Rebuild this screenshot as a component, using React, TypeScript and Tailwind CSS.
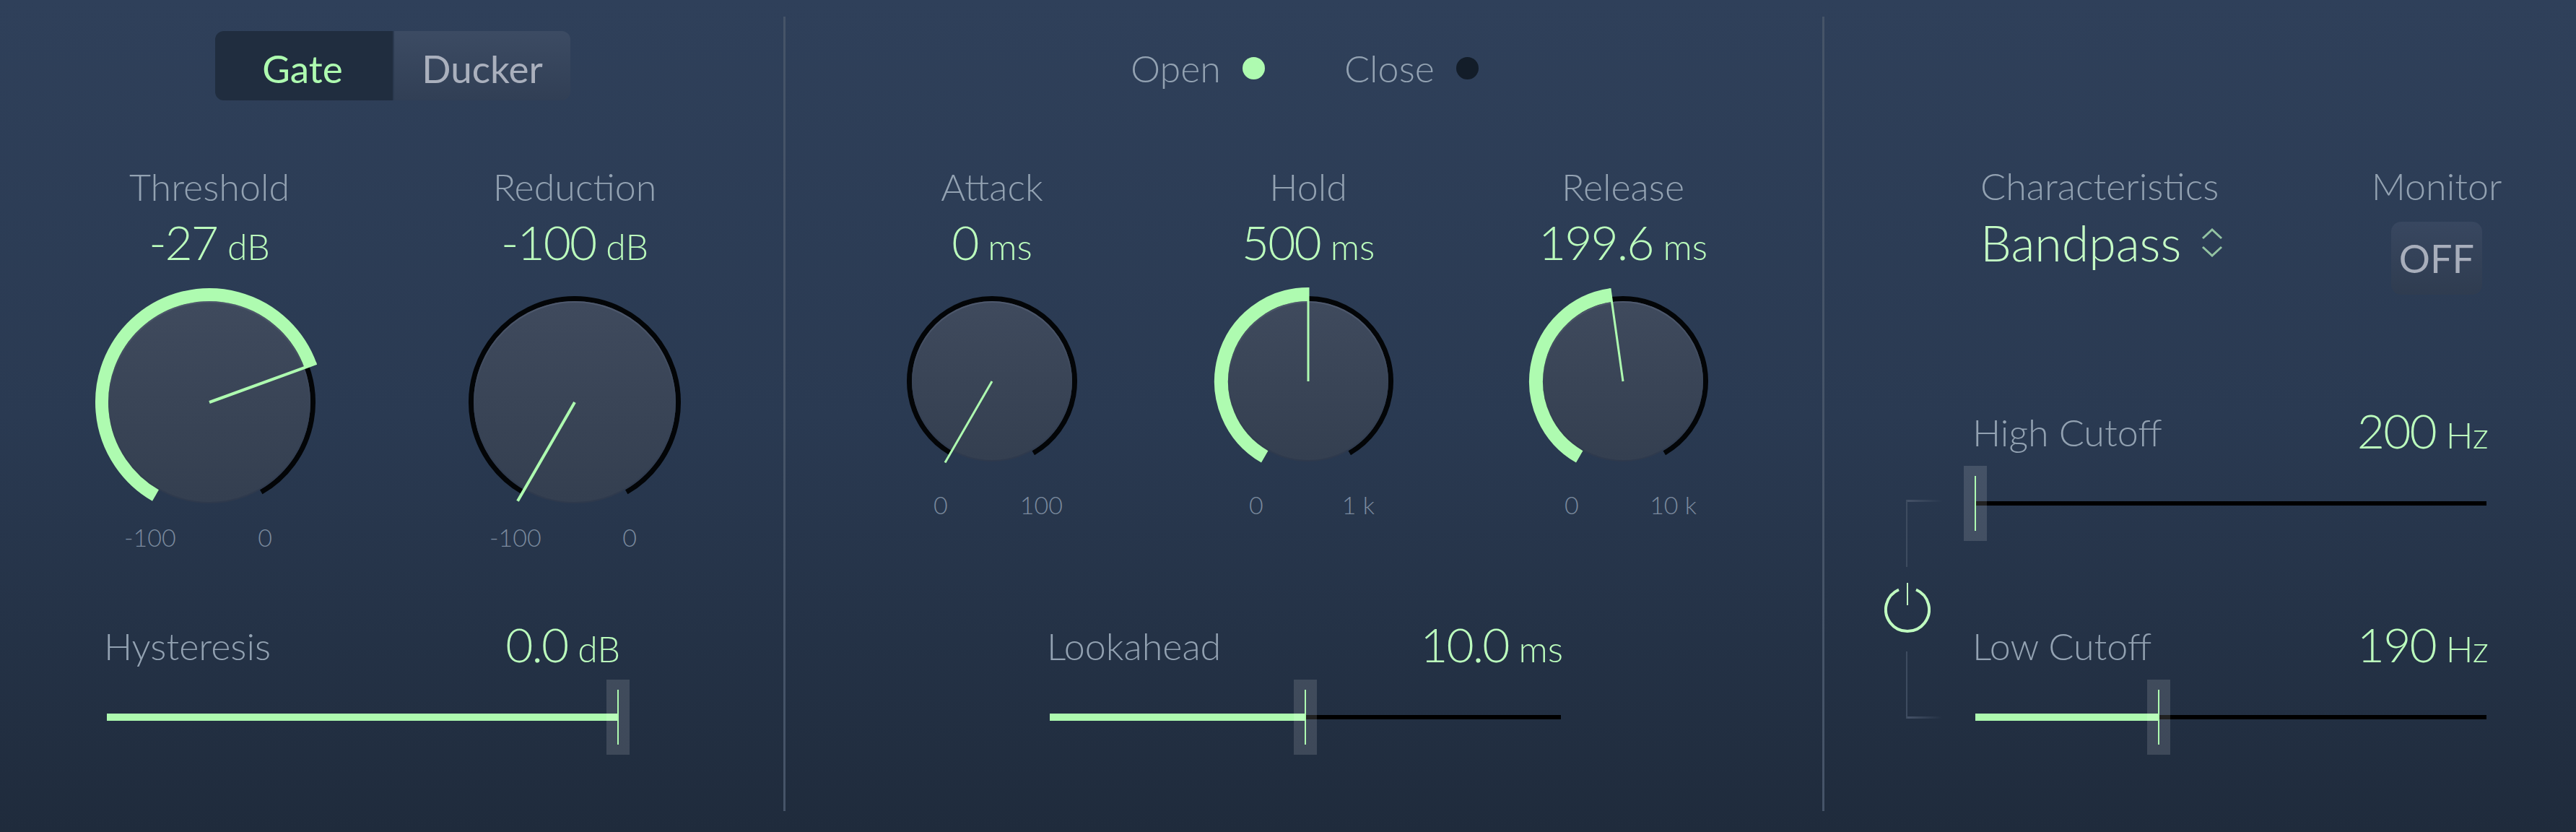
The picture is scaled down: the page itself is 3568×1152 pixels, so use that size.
import React from "react";

const FONT = "font-['Lato','Open_Sans',sans-serif]";

const polar = (cx: number, cy: number, r: number, deg: number) => {
  const a = ((deg - 90) * Math.PI) / 180;
  return [cx + r * Math.cos(a), cy + r * Math.sin(a)];
};

const arc = (cx: number, cy: number, r: number, from: number, to: number) => {
  const [x1, y1] = polar(cx, cy, r, from);
  const [x2, y2] = polar(cx, cy, r, to);
  const large = to - from > 180 ? 1 : 0;
  return `M${x1} ${y1}A${r} ${r} 0 ${large} 1 ${x2} ${y2}`;
};

type DialProps = {
  id: string;
  size: number;
  disc: number;
  ring: number;
  ringWidth: number;
  outer: number;
  angle: number;
  lit: boolean;
  pointer: number;
};

const Dial = ({ id, size, disc, ring, ringWidth, outer, angle, lit, pointer }: DialProps) => {
  const c = size / 2;
  const [px, py] = polar(c, c, outer, angle);
  return (
    <svg width={size} height={size} viewBox={`0 0 ${size} ${size}`} className="block">
      <defs>
        <linearGradient id={id} x1="0" y1="0" x2="0" y2="1">
          <stop offset="0" stopColor="#3f4a5d" />
          <stop offset="1" stopColor="#343f50" />
        </linearGradient>
        <linearGradient id={`${id}-rim`} x1="0" y1="0" x2="0" y2="1">
          <stop offset="0" stopColor="#4f596d" />
          <stop offset="0.5" stopColor="#3a4557" />
          <stop offset="1" stopColor="#2e394c" />
        </linearGradient>
      </defs>
      <path d={arc(c, c, ring, -150, 150)} fill="none" stroke="#030507" strokeWidth={ringWidth} />
      <circle cx={c} cy={c} r={disc - 1} fill={`url(#${id})`} stroke={`url(#${id}-rim)`} strokeWidth={2} />
      {lit && (
        <path
          d={arc(c, c, (outer + disc) / 2, -150, angle)}
          fill="none"
          stroke="#aefbb0"
          strokeWidth={outer - disc}
        />
      )}
      <line x1={c} y1={c} x2={px} y2={py} stroke="#aefbb0" strokeWidth={pointer} />
    </svg>
  );
};

const Value = ({ num, unit }: { num: string; unit: string }) => (
  <div className="text-[66px] leading-[70px] font-light text-[#bcfebd] whitespace-nowrap">
    <span className="tracking-[-0.03em]">{num}</span>{" "}
    <span className="-ml-[4px] text-[50px] leading-none font-light">{unit}</span>
  </div>
);

const Label = ({ children }: { children: React.ReactNode }) => (
  <div className="text-[52px] leading-[49px] font-light text-[#93a2b2] whitespace-nowrap">{children}</div>
);

type KnobProps = DialProps & {
  label: string;
  num: string;
  unit: string;
  min: string;
  max: string;
  scale: string;
  gap: string;
  col: string;
};

const Knob = ({ label, num, unit, min, max, scale, gap, col, ...dial }: KnobProps) => (
  <div className={`flex flex-col items-center ${col}`}>
    <Label>{label}</Label>
    <div className="mt-[17px]">
      <Value num={num} unit={unit} />
    </div>
    <div className={gap}>
      <Dial {...dial} />
    </div>
    <div className={`flex justify-between w-full text-[34px] leading-[40px] font-light text-[#7b8a9e] ${scale}`}>
      <span>{min}</span>
      <span>{max}</span>
    </div>
  </div>
);

const big = { size: 340, disc: 140, ring: 143.5, ringWidth: 7, outer: 158, pointer: 4, col: "w-[400px]", gap: "mt-[17px]" };
const small = { size: 280, disc: 111, ring: 114.5, ringWidth: 7, outer: 130, pointer: 3, col: "w-[300px]", gap: "mt-[18px]" };

type SliderProps = { label: string; num: string; unit: string; fill: number };

const Slider = ({ label, num, unit, fill }: SliderProps) => (
  <div className="w-[711px]">
    <div className="flex items-end justify-between">
      <div className="-ml-[4px] pb-[8px]">
        <Label>{label}</Label>
      </div>
      <Value num={num} unit={unit} />
    </div>
    <div className="relative mt-[14px] h-[104px] w-[708px]">
      <div className="absolute left-0 right-0 top-[49px] h-[6px] bg-black" />
      {fill > 0 && (
        <div className="absolute left-0 top-[47px] h-[10px] bg-[#aefbb0]" style={{ width: fill }} />
      )}
      <div
        className="absolute top-0 flex h-[104px] w-[32px] -translate-x-1/2 justify-center bg-white/[0.13] pt-[14px]"
        style={{ left: fill }}
      >
        <div className="h-[76px] w-[2px] bg-[#aefbb0]" />
      </div>
    </div>
  </div>
);

const Divider = () => <div className="mt-[23px] h-[1100px] w-[3px] shrink-0 bg-[#465468]" />;

const Led = ({ label, on }: { label: string; on: boolean }) => (
  <div className="flex items-center gap-[30px]">
    <Label>{label}</Label>
    <div className={`size-[31px] rounded-full ${on ? "bg-[#aefbb0]" : "bg-[#131d29]"}`} />
  </div>
);

const Bracket = ({ flip }: { flip?: boolean }) => (
  <div className={`flex h-[93px] w-[50px] border-l-2 border-[#3e4c60] ${flip ? "items-end" : "items-start"}`}>
    <div className="h-[3px] w-[48px] bg-gradient-to-r from-[#455267] to-transparent" />
  </div>
);

export default function App() {
  return (
    <div
      className={`flex h-[1152px] w-[3568px] overflow-hidden bg-gradient-to-b from-[#2f405a] via-[#2a3a52] to-[#1f2b3c] ${FONT}`}
    >
      {/* gate / ducker */}
      <div className="w-[1085px] shrink-0 pl-[60px] pt-[43px]">
        <div className="ml-[238px] flex h-[96px] w-[492px] overflow-hidden rounded-[12px] text-[53px] font-normal">
          <div className="flex w-[246px] items-center justify-center bg-[#202d3f] pt-[8px] pr-[4px] text-[#aefbb0]">Gate</div>
          <div className="flex flex-1 items-center justify-center border-l-2 border-[#2b3a50] bg-gradient-to-b from-[#3c4b63] to-[#313f55] pt-[8px] text-[#aab0bd]">
            Ducker
          </div>
        </div>
        <div className="ml-[30px] mt-[95px] flex gap-[106px]">
          <Knob id="threshold" {...big} angle={70} lit label="Threshold" num="-27" unit="dB" min="-100" max="0" scale="-mt-[3px] pl-[82px] pr-[113px]" />
          <Knob id="reduction" {...big} angle={-150} lit={false} label="Reduction" num="-100" unit="dB" min="-100" max="0" scale="-mt-[3px] pl-[82px] pr-[114px]" />
        </div>
        <div className="ml-[88px] mt-[93px]">
          <Slider label="Hysteresis" num="0.0" unit="dB" fill={708} />
        </div>
      </div>

      <Divider />

      {/* envelope */}
      <div className="w-[1436px] shrink-0 pl-[136px]">
        <div className="ml-[342px] mt-[70px] flex gap-[110px]">
          <Led label="Open" on />
          <Led label="Close" on={false} />
        </div>
        <div className="mt-[115px] grid grid-cols-[438px_436px_300px]">
          <Knob id="attack" {...small} angle={-150} lit={false} label="Attack" num="0" unit="ms" min="0" max="100" scale="mt-[11px] pl-[69px] pr-[52px]" />
          <Knob id="hold" {...small} angle={0} lit label="Hold" num="500" unit="ms" min="0" max="1 k" scale="mt-[11px] pl-[68px] pr-[58px]" />
          <Knob id="release" {...small} angle={-8} lit label="Release" num="199.6" unit="ms" min="0" max="10 k" scale="mt-[11px] pl-[69px] pr-[48px]" />
        </div>
        <div className="ml-[230px] mt-[138px]">
          <Slider label="Lookahead" num="10.0" unit="ms" fill={354} />
        </div>
      </div>

      <Divider />

      {/* sidechain */}
      <div className="flex-1 pl-[85px]">
        <div className="mt-[233px] flex">
          <div className="ml-[131px] w-[544px]">
            <Label>Characteristics</Label>
            <div className="mt-[19px] flex items-center gap-[28px] text-[68px] leading-[70px] font-light text-[#c6ffc6]">
              Bandpass
              <svg width="30" height="40" viewBox="0 0 30 40" fill="none" stroke="#93c3a2" strokeWidth="3">
                <path d="M2 14 15 2l13 12M2 26l13 12 13-12" />
              </svg>
            </div>
          </div>
          <div className="flex w-[176px] flex-col items-center">
            <Label>Monitor</Label>
            <div className="mt-[25px] flex h-[101px] w-[126px] items-center justify-center rounded-[14px] bg-gradient-to-b from-[#384760] to-[#2f3c50] text-[54px] text-[#a8aebb]">
              OFF
            </div>
          </div>
        </div>
        <div className="mt-[153px] flex">
          <div className="mt-[131px] flex w-[124px] flex-col items-start pl-[28px]">
            <Bracket />
            <svg width="64" height="70" viewBox="0 0 64 70" fill="none" className="-ml-[30px] mt-[21px]" stroke="#c0fdc0">
              <path d="M20 10.5a30 30 0 1 0 24 0" strokeWidth="4" />
              <path d="M32 1v31" strokeWidth="2" />
            </svg>
            <div className="mt-[26px]">
              <Bracket flip />
            </div>
          </div>
          <div>
            <Slider label="High Cutoff" num="200" unit="Hz" fill={0} />
            <div className="mt-[108px]">
              <Slider label="Low Cutoff" num="190" unit="Hz" fill={254} />
            </div>
          </div>
        </div>
      </div>
    </div>
  );
}
